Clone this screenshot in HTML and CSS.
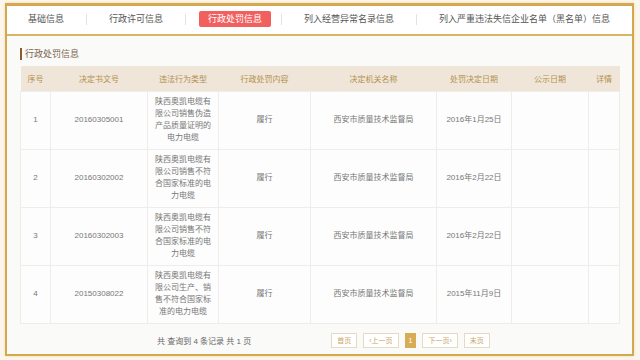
FILE: index.html
```html
<!DOCTYPE html>
<html lang="zh-CN">
<head>
    <meta charset="UTF-8">
    <meta name="viewport" content="width=device-width, initial-scale=1.0">
    <title>行政处罚信息</title>
    <link rel="stylesheet" href="styles.css">
</head>
<body>
    <div class="frame">
        <ul class="tabs">
            <li><span>基础信息</span></li>
            <li><span>行政许可信息</span></li>
            <li class="active"><span>行政处罚信息</span></li>
            <li><span>列入经营异常名录信息</span></li>
            <li><span>列入严重违法失信企业名单（黑名单）信息</span></li>
        </ul>

        <div class="panel">
            <h4 class="panel-title">行政处罚信息</h4>
            <table class="grid">
                <colgroup>
                    <col style="width:30px">
                    <col style="width:97px">
                    <col style="width:71px">
                    <col style="width:92px">
                    <col style="width:126px">
                    <col style="width:75px">
                    <col style="width:77px">
                    <col style="width:31px">
                </colgroup>
                <thead>
                    <tr>
                        <th>序号</th>
                        <th>决定书文号</th>
                        <th>违法行为类型</th>
                        <th>行政处罚内容</th>
                        <th>决定机关名称</th>
                        <th>处罚决定日期</th>
                        <th>公示日期</th>
                        <th>详情</th>
                    </tr>
                </thead>
                <tbody>
                    <tr>
                        <td>1</td>
                        <td>20160305001</td>
                        <td class="wrap">陕西奥凯电缆有限公司销售伪造产品质量证明的电力电缆</td>
                        <td>履行</td>
                        <td>西安市质量技术监督局</td>
                        <td>2016年1月25日</td>
                        <td></td>
                        <td></td>
                    </tr>
                    <tr>
                        <td>2</td>
                        <td>20160302002</td>
                        <td class="wrap">陕西奥凯电缆有限公司销售不符合国家标准的电力电缆</td>
                        <td>履行</td>
                        <td>西安市质量技术监督局</td>
                        <td>2016年2月22日</td>
                        <td></td>
                        <td></td>
                    </tr>
                    <tr>
                        <td>3</td>
                        <td>20160302003</td>
                        <td class="wrap">陕西奥凯电缆有限公司销售不符合国家标准的电力电缆</td>
                        <td>履行</td>
                        <td>西安市质量技术监督局</td>
                        <td>2016年2月22日</td>
                        <td></td>
                        <td></td>
                    </tr>
                    <tr>
                        <td>4</td>
                        <td>20150308022</td>
                        <td class="wrap">陕西奥凯电缆有限公司生产、销售不符合国家标准的电力电缆</td>
                        <td>履行</td>
                        <td>西安市质量技术监督局</td>
                        <td>2015年11月9日</td>
                        <td></td>
                        <td></td>
                    </tr>
                </tbody>
            </table>

            <div class="pager">
                <span class="pager-info">共 查询到 4 条记录 共 1 页</span>
                <div class="pager-links">
                    <a>首页</a>
                    <a>‹上一页</a>
                    <a class="current">1</a>
                    <a>下一页›</a>
                    <a>末页</a>
                </div>
            </div>
        </div>
    </div>
</body>
</html>
```

FILE: styles.css
```css
* {
    margin: 0;
    padding: 0;
    box-sizing: border-box;
}

html {
    background: #fcf7ee;
}

body {
    font-family: "Liberation Sans", "Noto Sans CJK SC", sans-serif;
    padding: 3px 6px 5px 5px;
}

/* 外框 */
.frame {
    border: 2px solid #d3a84e;
    border-top-width: 3px;
    background: #fafaf9;
    box-shadow: 0 0 3px rgba(211, 168, 78, 0.35);
}

/* 顶部选项卡 */
.tabs {
    list-style: none;
    display: flex;
    align-items: center;
    height: 30px;
    padding-bottom: 2px;
    background: #fff;
    border-bottom: 2px solid #d9b465;
    font-size: 9px;
    color: #555;
}

.tabs li {
    display: flex;
    align-items: center;
    height: 11px;
    padding: 0 13px;
}

.tabs li:first-child {
    padding-left: 12px;
}

.tabs li + li {
    border-left: 1px solid #e3e3e3;
}

.tabs li span {
    display: block;
    line-height: 12px;
    padding: 2px 9px;
    border-radius: 2px;
    white-space: nowrap;
}

.tabs li.active span {
    background: #f15f5f;
    color: #fff;
}

.tabs li.active {
    padding-right: 10px;
}

/* 内容区域 */
.panel {
    padding: 12px 12px 0 13px;
}

.panel-title {
    font-size: 9px;
    font-weight: normal;
    line-height: 12px;
    color: #7b6450;
    border-left: 2px solid #8b5b32;
    padding-left: 3px;
    margin-bottom: 6px;
}

.grid {
    width: 100%;
    table-layout: fixed;
    border-collapse: collapse;
    font-size: 8px;
    text-align: center;
}

.grid th {
    height: 25px;
    background: #efe6d9;
    color: #b58e4c;
    font-weight: normal;
}

.grid td {
    height: 58px;
    color: #777;
    background: #fdfdfd;
    border: 1px solid #efede9;
    line-height: 12px;
}

.grid td.wrap {
    padding: 0 5px;
}

/* 分页 */
.pager {
    display: flex;
    align-items: center;
    height: 26px;
    margin-top: 4px;
    font-size: 8px;
}

.pager-info {
    margin-left: 137px;
    color: #666;
    white-space: nowrap;
}

.pager-links {
    display: flex;
    gap: 6px;
    margin-left: 80px;
}

.pager-links a {
    display: block;
    height: 15px;
    line-height: 13px;
    padding: 0 5px;
    border: 1px solid #e6dac3;
    color: #c8a66c;
    font-size: 7px;
    background: #fff;
}

.pager-links a.current {
    padding: 0 3px;
    background: #d8ab55;
    border-color: #d8ab55;
    color: #fff;
}
```
